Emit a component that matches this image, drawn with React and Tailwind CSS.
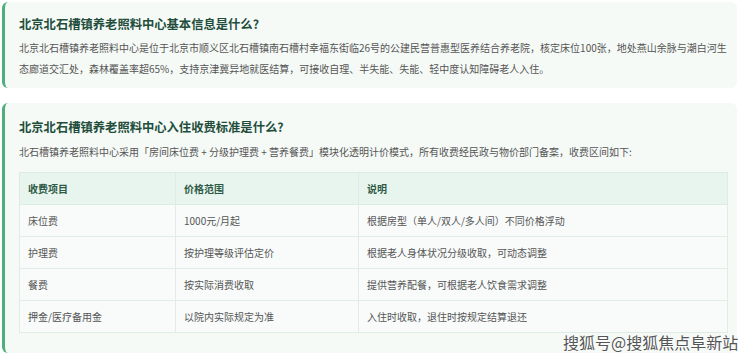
export default function App() {
  const rows = [
    ["床位费", "1000元/月起", "根据房型（单人/双人/多人间）不同价格浮动"],
    ["护理费", "按护理等级评估定价", "根据老人身体状况分级收取，可动态调整"],
    ["餐费", "按实际消费收取", "提供营养配餐，可根据老人饮食需求调整"],
    ["押金/医疗备用金", "以院内实际规定为准", "入住时收取，退住时按规定结算退还"],
  ];
  const font = { fontFamily: '"Noto Sans CJK SC", "Noto Sans", sans-serif' };
  return (
    <div className="relative w-[740px] h-[355px] overflow-hidden bg-white" style={font}>
      <div className="mt-[2px] ml-[2px] mr-[3px] rounded-[6px] border-l-[3px] border-[#4fae7c] bg-[#f5faf7] pl-[14px] pr-[4px] pt-[12px] pb-[9px]">
        <h2 className="text-[12.3px] leading-[20px] font-bold text-[#234d3b]">北京北石槽镇养老照料中心基本信息是什么?</h2>
        <p className="mt-[3px] text-[10px] leading-[21px] text-[#555]">
          北京北石槽镇养老照料中心是位于北京市顺义区北石槽镇南石槽村幸福东街临26号的公建民营普惠型医养结合养老院，核定床位100张，地处燕山余脉与潮白河生态廊道交汇处，森林覆盖率超65%，支持京津冀异地就医结算，可接收自理、半失能、失能、轻中度认知障碍老人入住。
        </p>
      </div>
      <div className="mt-[15px] ml-[2px] mr-[3px] rounded-[6px] border-l-[3px] border-[#4fae7c] bg-[#f5faf7] pl-[14px] pr-[9px] pt-[14px] pb-[20px]">
        <h2 className="text-[12.3px] leading-[20px] font-bold text-[#234d3b]">北京北石槽镇养老照料中心入住收费标准是什么?</h2>
        <p className="mt-[4px] text-[10px] leading-[21px] text-[#555]">
          北石槽镇养老照料中心采用「房间床位费 + 分级护理费 + 营养餐费」模块化透明计价模式，所有收费经民政与物价部门备案，收费区间如下:
        </p>
        <table className="mt-[10px] w-[709px] border-collapse text-[10px] text-[#555]">
          <colgroup>
            <col className="w-[156px]" />
            <col className="w-[183px]" />
            <col />
          </colgroup>
          <thead>
            <tr className="bg-[#e8f4ee] h-[32px]">
              <th className="border border-[#dcece4] px-[8px] text-left font-bold text-[#2c5a45]">收费项目</th>
              <th className="border border-[#dcece4] px-[8px] text-left font-bold text-[#2c5a45]">价格范围</th>
              <th className="border border-[#dcece4] px-[8px] text-left font-bold text-[#2c5a45]">说明</th>
            </tr>
          </thead>
          <tbody>
            {rows.map((r, i) => (
              <tr key={i} className="bg-[#f8fbfa] h-[32px]">
                {r.map((c, j) => (
                  <td key={j} className="border border-[#e0ede7] px-[8px]">{c}</td>
                ))}
              </tr>
            ))}
          </tbody>
        </table>
      </div>
      <div className="absolute left-[563px] top-[331px] text-[16px] leading-[22px] text-[#555] [text-shadow:0_0_2px_#fff,0_0_2px_#fff]">
        搜狐号@搜狐焦点阜新站
      </div>
    </div>
  );
}
